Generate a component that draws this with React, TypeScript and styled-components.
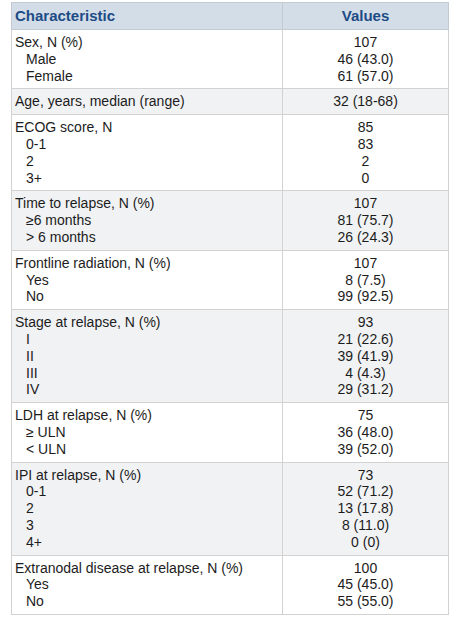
import styled, { createGlobalStyle } from 'styled-components';

const GlobalStyle = createGlobalStyle`
    body {
        margin: 0;
        background: #ffffff;
        font-family: "Liberation Sans", Arial, sans-serif;
    }
`;

type Group = {
    label: string;
    total: string;
    items: [string, string][];
};

const groups: Group[] = [
    { label: 'Sex, N (%)', total: '107', items: [['Male', '46 (43.0)'], ['Female', '61 (57.0)']] },
    { label: 'Age, years, median (range)', total: '32 (18-68)', items: [] },
    { label: 'ECOG score, N', total: '85', items: [['0-1', '83'], ['2', '2'], ['3+', '0']] },
    { label: 'Time to relapse, N (%)', total: '107', items: [['≥6 months', '81 (75.7)'], ['> 6 months', '26 (24.3)']] },
    { label: 'Frontline radiation, N (%)', total: '107', items: [['Yes', '8 (7.5)'], ['No', '99 (92.5)']] },
    {
        label: 'Stage at relapse, N (%)',
        total: '93',
        items: [['I', '21 (22.6)'], ['II', '39 (41.9)'], ['III', '4 (4.3)'], ['IV', '29 (31.2)']],
    },
    { label: 'LDH at relapse, N (%)', total: '75', items: [['≥ ULN', '36 (48.0)'], ['< ULN', '39 (52.0)']] },
    {
        label: 'IPI at relapse, N (%)',
        total: '73',
        items: [['0-1', '52 (71.2)'], ['2', '13 (17.8)'], ['3', '8 (11.0)'], ['4+', '0 (0)']],
    },
    { label: 'Extranodal disease at relapse, N (%)', total: '100', items: [['Yes', '45 (45.0)'], ['No', '55 (55.0)']] },
];

const Page = styled.div`
    padding: 2px 3px 4px 11px;
`;

const Table = styled.table`
    width: 437px;
    border-collapse: collapse;
    table-layout: fixed;
    font-size: 14px;
    line-height: 16.8px;
    color: #1c1c1c;
`;

const HeadCell = styled.th<{ $center?: boolean }>`
    height: 26px;
    padding: 0 3px;
    background: #d3dde7;
    color: #1d4b86;
    font-weight: bold;
    font-size: 15px;
    text-align: ${p => (p.$center ? 'center' : 'left')};
    border: 1px solid #c3cad2;
`;

const Row = styled.tr<{ $shaded: boolean }>`
    background: ${p => (p.$shaded ? '#f1f2f4' : '#ffffff')};
`;

const Cell = styled.td<{ $center?: boolean }>`
    padding: 4px 3px 4px 3px;
    vertical-align: top;
    text-align: ${p => (p.$center ? 'center' : 'left')};
    border: 1px solid #d2d2d2;
`;

const Line = styled.div<{ $sub?: boolean }>`
    padding-left: ${p => (p.$sub ? '11px' : '0')};
    white-space: nowrap;
`;

export default function App() {
    return (
        <Page>
            <GlobalStyle />
            <Table>
                <colgroup>
                    <col style={{ width: 271 }} />
                    <col style={{ width: 166 }} />
                </colgroup>
                <thead>
                    <tr>
                        <HeadCell>Characteristic</HeadCell>
                        <HeadCell $center>Values</HeadCell>
                    </tr>
                </thead>
                <tbody>
                    {groups.map((g, i) => (
                        <Row key={g.label} $shaded={i % 2 === 1}>
                            <Cell>
                                <Line>{g.label}</Line>
                                {g.items.map(([name]) => (
                                    <Line key={name} $sub>
                                        {name}
                                    </Line>
                                ))}
                            </Cell>
                            <Cell $center>
                                <Line>{g.total}</Line>
                                {g.items.map(([name, value]) => (
                                    <Line key={name}>{value}</Line>
                                ))}
                            </Cell>
                        </Row>
                    ))}
                </tbody>
            </Table>
        </Page>
    );
}
